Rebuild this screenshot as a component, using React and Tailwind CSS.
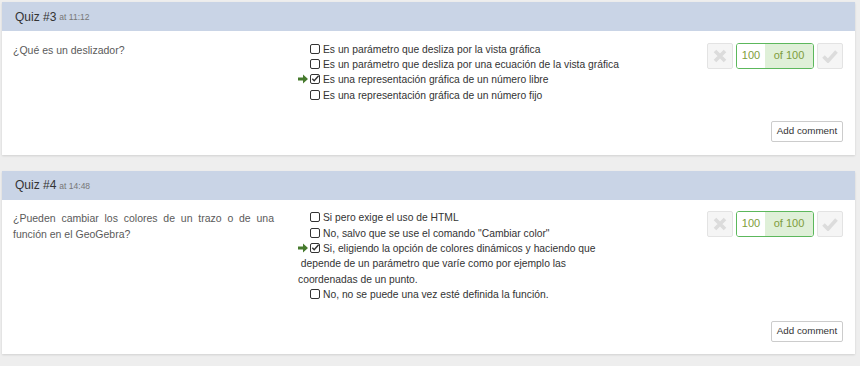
import React from 'react';

const quizzes = [
  {
    title: 'Quiz #3',
    time: 'at 11:12',
    question: '¿Qué es un deslizador?',
    options: [
      { lines: ['Es un parámetro que desliza por la vista gráfica'] },
      { lines: ['Es un parámetro que desliza por una ecuación de la vista gráfica'] },
      { lines: ['Es una representación gráfica de un número libre'], correct: true },
      { lines: ['Es una representación gráfica de un número fijo'] },
    ],
  },
  {
    title: 'Quiz #4',
    time: 'at 14:48',
    question: '¿Pueden cambiar los colores de un trazo o de una función en el GeoGebra?',
    options: [
      { lines: ['Si pero exige el uso de HTML'] },
      { lines: ['No, salvo que se use el comando "Cambiar color"'] },
      {
        lines: [
          'Si, eligiendo la opción de colores dinámicos y haciendo que',
          '\u00a0depende de un parámetro que varíe como por ejemplo las',
          'coordenadas de un punto.',
        ],
        correct: true,
      },
      { lines: ['No, no se puede una vez esté definida la función.'] },
    ],
  },
];

function CheckBox({ checked }) {
  return (
    <svg width="10" height="10" viewBox="0 0 10 10" className="inline-block align-[-1px] mr-[3px]">
      <rect x="0.5" y="0.5" width="9" height="9" rx="1.5" fill="none" stroke="#333" strokeWidth="1" />
      {checked && <path d="M2.3 4.8 L4.2 6.8 L8.6 1.8" fill="none" stroke="#333" strokeWidth="1.4" />}
    </svg>
  );
}

function Arrow() {
  return (
    <span className="inline-block w-[12px]">
      <svg width="10" height="10" viewBox="0 0 10 10" className="inline-block align-[-1px]">
        <path d="M0 3.4 H5 V0.5 L10 5 L5 9.5 V6.6 H0 Z" fill="#467a2d" />
      </svg>
    </span>
  );
}

function QuizCard({ quiz, className }) {
  return (
    <div className={`bg-white shadow-[0_1px_2px_rgba(0,0,0,0.12)] ${className}`}>
      <div className="h-[29px] bg-[#c9d4e6] flex items-center pl-[13px] text-[#333]">
        <span className="text-[12px]">{quiz.title}</span>
        <span className="text-[8.5px] text-[#777] ml-[3px] mt-[2px]">{quiz.time}</span>
      </div>
      <div className="pl-[11px] pr-[12px] pt-[10.5px] pb-[12.5px]">
        <div className="flex">
          <div className="w-[261px] text-[10.5px] leading-[16px] text-[#5a5a5a] text-justify">{quiz.question}</div>
          <div className="ml-[24px] flex-1 text-[10.3px] leading-[15.4px] text-[#333]">
            {quiz.options.map((opt, i) => (
              <div key={i}>
                {opt.correct ? <Arrow /> : <span className="inline-block w-[12px]" />}
                <CheckBox checked={opt.correct} />
                {opt.lines.map((l, j) => (
                  <React.Fragment key={j}>
                    {j > 0 && <br />}
                    {l}
                  </React.Fragment>
                ))}
              </div>
            ))}
          </div>
          <div className="w-[136px] flex gap-[3px] mt-[1px] h-[26px]">
            <div className="w-[26px] h-[26px] rounded-[2px] border border-[#e3e3e3] bg-[#f5f5f5] flex items-center justify-center">
              <svg width="14" height="14" viewBox="0 0 14 14">
                <path d="M2 2 L12 12 M12 2 L2 12" stroke="#dcdcdc" strokeWidth="3.6" />
              </svg>
            </div>
            <div className="w-[78px] h-[26px] rounded-[3px] border border-[#5cb85c] flex overflow-hidden text-[11px] text-[#7e9c3b]">
              <div className="w-[28px] bg-white flex items-center justify-center pb-[1px]">100</div>
              <div className="flex-1 bg-[#dff0d8] flex items-center justify-center pb-[1px]">of 100</div>
            </div>
            <div className="w-[26px] h-[26px] rounded-[2px] border border-[#e3e3e3] bg-[#f5f5f5] flex items-center justify-center">
              <svg width="16" height="14" viewBox="0 0 16 14">
                <path d="M1.5 7.5 L6 12 L14.5 2.5" fill="none" stroke="#dcdcdc" strokeWidth="3.6" />
              </svg>
            </div>
          </div>
        </div>
        <div className="flex justify-end mt-[18px]">
          <button className="h-[21px] w-[72px] border border-[#ccc] rounded-[2px] bg-white text-[9.8px] text-[#333] flex items-center justify-center">
            Add comment
          </button>
        </div>
      </div>
    </div>
  );
}

export default function App() {
  return (
    <div className="w-[860px] h-[366px] bg-[#eeeeee] overflow-hidden font-['Liberation_Sans',Arial,sans-serif]">
      <div className="ml-[2px] w-[853px] pt-[2px]">
        <QuizCard quiz={quizzes[0]} />
        <QuizCard quiz={quizzes[1]} className="mt-[16px]" />
      </div>
    </div>
  );
}
